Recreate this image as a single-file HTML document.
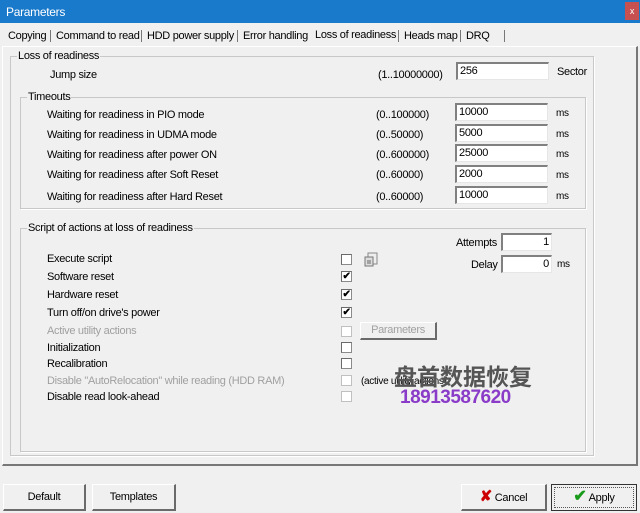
<!DOCTYPE html>
<html><head><meta charset="utf-8"><style>
*{margin:0;padding:0;box-sizing:border-box}
body{width:640px;height:513px;background:#f0f0f0;font-family:"Liberation Sans",sans-serif;font-size:11px;color:#000;position:relative;overflow:hidden;letter-spacing:-0.3px}
.a{position:absolute;white-space:nowrap}
.title{left:0;top:0;width:640px;height:23px;background:#1979ca;color:#fff;font-size:12px;padding:5px 0 0 6px}
.x{position:absolute;right:1px;top:2px;width:14px;height:18px;background:#c75050;color:#fff;font-size:9px;text-align:center;line-height:18px}
.grp{position:absolute;border:1px solid #c8c8c8;box-shadow:1px 1px 0 #fff}
.lg{position:absolute;top:-7px;left:6px;background:#f0f0f0;padding:0 1px}
.in{position:absolute;background:#fff;border-top:2px solid #808080;border-left:2px solid #808080;border-right:1px solid #e6e6e6;border-bottom:1px solid #e6e6e6;padding:1px 2px;height:18px;font-size:11px}
.cb{position:absolute;width:11px;height:11px;border:1px solid #8a8a8a;border-top-color:#6a6a6a;border-left-color:#6a6a6a;background:#fff;font-size:10px;line-height:9px;text-align:center;font-weight:bold}
.btn{position:absolute;border:1px solid #fff;border-right:2px solid #6a6a6a;border-bottom:2px solid #6a6a6a;background:#f0f0f0;text-align:center;font-size:11px}
.g{color:#a0a0a0}
</style></head><body>
<div class="a title">Parameters<div class="x">x</div></div>
<div class="a" style="top:30px;left:8px">Copying</div>
<div class="a" style="top:30px;left:50px;border-left:1px solid #777;padding-left:5px">Command to read</div>
<div class="a" style="top:30px;left:141px;border-left:1px solid #777;padding-left:5px">HDD power supply</div>
<div class="a" style="top:30px;left:237px;border-left:1px solid #777;padding-left:5px">Error handling</div>
<div class="a" style="top:29px;left:311px;padding:0 4px;">Loss of readiness</div>
<div class="a" style="top:30px;left:398px;border-left:1px solid #777;padding-left:5px">Heads map</div>
<div class="a" style="top:30px;left:460px;border-left:1px solid #777;padding-left:5px;padding-right:14px;border-right:1px solid #777">DRQ</div>
<div class="a" style="left:2px;top:46px;width:636px;height:420px;border-top:1px solid #fff;border-left:1px solid #fff;border-right:2px solid #777;border-bottom:2px solid #777"></div>
<div class="grp" style="left:10px;top:56px;width:584px;height:400px"><div class="lg">Loss of readiness</div></div>
<div class="a" style="left:50px;top:69px">Jump size</div>
<div class="a" style="left:378px;top:69px">(1..10000000)</div>
<div class="in" style="left:456px;top:62px;width:93px">256</div>
<div class="a" style="left:557px;top:66px">Sector</div>
<div class="grp" style="left:20px;top:97px;width:566px;height:112px"><div class="lg">Timeouts</div></div>
<div class="a" style="left:47px;top:109px">Waiting for readiness in PIO mode</div>
<div class="a" style="left:47px;top:129px">Waiting for readiness in UDMA mode</div>
<div class="a" style="left:47px;top:149px">Waiting for readiness after power ON</div>
<div class="a" style="left:47px;top:169px">Waiting for readiness after Soft Reset</div>
<div class="a" style="left:47px;top:191px">Waiting for readiness after Hard Reset</div>
<div class="a" style="left:376px;top:109px">(0..100000)</div>
<div class="a" style="left:376px;top:129px">(0..50000)</div>
<div class="a" style="left:376px;top:149px">(0..600000)</div>
<div class="a" style="left:376px;top:169px">(0..60000)</div>
<div class="a" style="left:376px;top:191px">(0..60000)</div>
<div class="in" style="left:455px;top:103px;width:93px">10000</div>
<div class="in" style="left:455px;top:124px;width:93px">5000</div>
<div class="in" style="left:455px;top:144px;width:93px">25000</div>
<div class="in" style="left:455px;top:165px;width:93px">2000</div>
<div class="in" style="left:455px;top:186px;width:93px">10000</div>
<div class="a" style="left:556px;top:108px;font-size:10px">ms</div>
<div class="a" style="left:556px;top:129px;font-size:10px">ms</div>
<div class="a" style="left:556px;top:149px;font-size:10px">ms</div>
<div class="a" style="left:556px;top:170px;font-size:10px">ms</div>
<div class="a" style="left:556px;top:191px;font-size:10px">ms</div>
<div class="grp" style="left:20px;top:228px;width:566px;height:224px"><div class="lg">Script of actions at loss of readiness</div></div>
<div class="a" style="left:47px;top:253px">Execute script</div>
<div class="a" style="left:47px;top:271px">Software reset</div>
<div class="a" style="left:47px;top:289px">Hardware reset</div>
<div class="a" style="left:47px;top:307px">Turn off/on drive's power</div>
<div class="a g" style="left:47px;top:325px">Active utility actions</div>
<div class="a" style="left:47px;top:342px">Initialization</div>
<div class="a" style="left:47px;top:358px">Recalibration</div>
<div class="a g" style="left:47px;top:375px">Disable "AutoRelocation" while reading (HDD RAM)</div>
<div class="a" style="left:47px;top:391px">Disable read look-ahead</div>
<div class="cb" style="left:341px;top:254px"></div>
<div class="cb" style="left:341px;top:271px">✔</div>
<div class="cb" style="left:341px;top:289px">✔</div>
<div class="cb" style="left:341px;top:307px">✔</div>
<div class="cb" style="left:341px;top:326px;border-color:#c0c0c0"></div>
<div class="cb" style="left:341px;top:342px"></div>
<div class="cb" style="left:341px;top:358px"></div>
<div class="cb" style="left:341px;top:375px;border-color:#c0c0c0"></div>
<div class="cb" style="left:341px;top:391px;border-color:#c0c0c0"></div>
<svg class="a" style="left:364px;top:252px" width="16" height="16"><rect x="4" y="1" width="9" height="11" fill="#eee" stroke="#888"/><rect x="1" y="5" width="8" height="9" fill="#ddd" stroke="#777"/><path d="M3 9h4M3 11h4" stroke="#666"/></svg>
<div class="btn g" style="left:360px;top:322px;width:77px;height:18px;line-height:15px">Parameters</div>
<div class="a" style="left:361px;top:376px;font-size:10px">(active utility actions)</div>
<div class="a" style="left:456px;top:237px">Attempts</div>
<div class="in" style="left:501px;top:233px;width:51px;text-align:right">1</div>
<div class="a" style="left:471px;top:259px">Delay</div>
<div class="in" style="left:501px;top:255px;width:51px;text-align:right">0</div>
<div class="a" style="left:557px;top:259px;font-size:10px">ms</div>
<div class="a" style="left:394px;top:358px;font-family:'Noto Sans CJK SC',sans-serif;font-size:23px;font-weight:bold;color:#555;letter-spacing:0">盘首数据恢复</div>
<div class="a" style="left:400px;top:387px;font-size:19px;font-weight:bold;color:#8a3cc8;letter-spacing:-0.5px">18913587620</div>
<div class="btn" style="left:3px;top:484px;width:83px;height:27px;line-height:24px">Default</div>
<div class="btn" style="left:92px;top:484px;width:84px;height:27px;line-height:24px">Templates</div>
<div class="btn" style="left:461px;top:484px;width:86px;height:27px;line-height:24px"><span style="color:#c00;font-weight:bold;font-size:15px">✘</span> Cancel</div>
<div class="btn" style="left:551px;top:484px;width:86px;height:27px;line-height:24px;border:1px solid #333;outline:1px dotted #555;outline-offset:-4px"><span style="color:#1a9a1a;font-weight:bold;font-size:16px">✔</span> Apply</div>
</body></html>
